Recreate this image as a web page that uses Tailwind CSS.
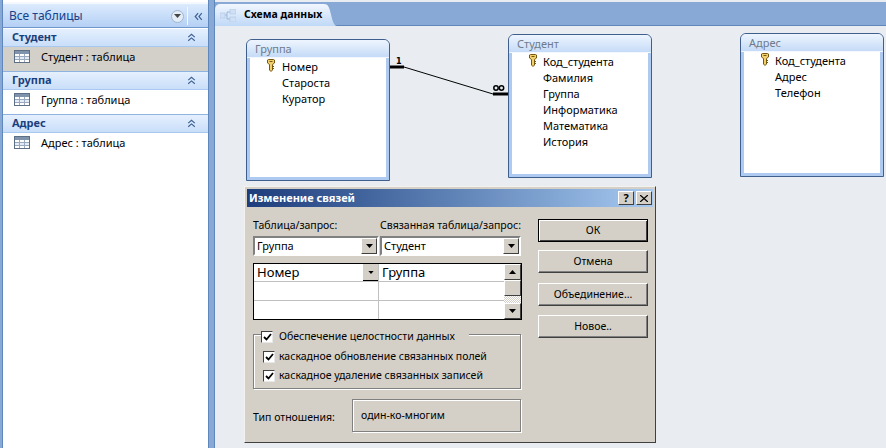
<!DOCTYPE html>
<html lang="ru">
<head>
    <meta charset="UTF-8">
    <title>Схема данных</title>
    <script src="https://cdn.jsdelivr.net/npm/@tailwindcss/browser@4"></script>
</head>
<body class="w-[886px] h-[448px] overflow-hidden bg-[#e9edf1] text-[11px] text-black font-['Noto_Sans',sans-serif]">
    <svg class="hidden">
        <symbol id="tbl" viewBox="0 0 16 13">
            <rect x="0.5" y="0.5" width="15" height="12" fill="#fff" stroke="#5d6f86"/>
            <rect x="1" y="1" width="14" height="3" fill="#7f93ad"/>
            <rect x="1" y="7" width="14" height="2" fill="#e3ebf6"/>
            <path d="M1 6.500H15M1 9.500H15M5.500 4V12M10.500 4V12" stroke="#9aa9bd" fill="none"/>
        </symbol>
        <symbol id="key" viewBox="0 0 8 13">
            <path d="M.5 1 1.500.5h5l1 .5v3L5.500 5.500V11L4 12.500 2.500 11V5.500L.5 4Z" fill="#f0cf6c" stroke="#75570f"/>
            <path d="M2.500 2.500h3" stroke="#75570f"/>
            <path d="M5.500 7.500H7M5.500 9.500H7" stroke="#75570f"/>
        </symbol>
        <symbol id="chev" viewBox="0 0 11 10">
            <path d="M1.500 4.500 5.500 1l4 3.500M1.500 9 5.500 5.500l4 3.500" fill="none" stroke="#3b5f92" stroke-width="1.400"/>
        </symbol>
        <symbol id="down" viewBox="0 0 7 4"><path d="M0 0H7L3.500 4Z" fill="#000"/></symbol>
    </svg>

    <div class="flex h-full">
        <!-- Navigation pane -->
        <aside class="w-[214px] shrink-0 h-full flex bg-[#88a9d6]">
            <div class="w-[207px] h-full ml-[2px] flex flex-col border-x border-[#5f87bb] bg-white">
                <div class="h-[25px] mt-[2px] shrink-0 flex items-center pl-[6px] pt-[1px] border-t-2 border-[#f5f9fe] bg-gradient-to-b from-[#dcebfd] to-[#b4d0f5] text-[#15428b] text-[12px] shadow-[0_1px_0_#6f97cc]">
                    <span class="flex-1">Все таблицы</span>
                    <span class="w-[13px] h-[13px] mr-[3px] rounded-full border border-[#9fb4cf] bg-[#e4ecf6] flex items-center justify-center">
                        <svg class="w-[7px] h-[4px] opacity-70"><use href="#down"/></svg>
                    </span>
                    <span class="w-px h-[18px] bg-[#f5f9fe] mr-[6px]"></span>
                    <svg class="w-[9px] h-[9px] mr-[5px] -rotate-90"><use href="#chev"/></svg>
                </div>
                <div class="h-[2px] shrink-0"></div>
                <section class="h-[43px] shrink-0 flex flex-col bg-[#d3d0c9] border-b border-[#8fb2e0]">
                    <div class="h-[18px] flex items-center justify-between pl-[9px] pr-[12px] bg-gradient-to-b from-[#e5f0fe] to-[#c9def9] border-b border-[#a9c8f0] text-[#1b3f7c] font-bold text-[11px]">
                        <span>Студент</span><svg class="w-[9px] h-[9px]"><use href="#chev"/></svg>
                    </div>
                    <div class="flex-1 flex items-start">
                        <svg class="w-[16px] h-[13px] ml-[11px] mt-[3px]"><use href="#tbl"/></svg>
                        <span class="ml-[11px] mt-[2px]">Студент : таблица</span>
                    </div>
                </section>
                <section class="h-[43px] shrink-0 flex flex-col border-b border-[#8fb2e0]">
                    <div class="h-[18px] flex items-center justify-between pl-[9px] pr-[12px] bg-gradient-to-b from-[#e5f0fe] to-[#c9def9] border-b border-[#a9c8f0] text-[#1b3f7c] font-bold text-[11px]">
                        <span>Группа</span><svg class="w-[9px] h-[9px]"><use href="#chev"/></svg>
                    </div>
                    <div class="flex-1 flex items-start">
                        <svg class="w-[16px] h-[13px] ml-[11px] mt-[3px]"><use href="#tbl"/></svg>
                        <span class="ml-[11px] mt-[2px]">Группа : таблица</span>
                    </div>
                </section>
                <section class="flex-1 flex flex-col">
                    <div class="h-[18px] flex items-center justify-between pl-[9px] pr-[12px] bg-gradient-to-b from-[#e5f0fe] to-[#c9def9] border-b border-[#a9c8f0] text-[#1b3f7c] font-bold text-[11px]">
                        <span>Адрес</span><svg class="w-[9px] h-[9px]"><use href="#chev"/></svg>
                    </div>
                    <div class="flex-1 flex items-start">
                        <svg class="w-[16px] h-[13px] ml-[11px] mt-[3px]"><use href="#tbl"/></svg>
                        <span class="ml-[11px] mt-[2px]">Адрес : таблица</span>
                    </div>
                </section>
            </div>
        </aside>

        <!-- Document area -->
        <main class="relative flex-1 h-full border-l border-[#5f87bb]">
            <div class="h-[24px] mt-[2px] bg-[#88a9d6] border-b border-[#5f87bb] flex items-end">
                <div class="w-[108px] h-[22px] shrink-0 -mb-px flex items-center pl-[5px] gap-[8px] whitespace-nowrap rounded-tl-[5px] bg-gradient-to-b from-[#f2f7fe] to-[#bfd8f7] font-bold text-[10.500px]">
                    <svg class="w-[16px] h-[13px] shrink-0" viewBox="0 0 16 13">
                        <path d="M4 6h3M7 3v7M7 3h3M7 10h3" stroke="#9db7d8" fill="none"/>
                        <rect x="0" y="4" width="5" height="5" fill="#cfe0f5" stroke="#a9c0de" stroke-width=".5"/>
                        <rect x="10" y="0" width="6" height="5" fill="#cfe0f5" stroke="#a9c0de" stroke-width=".5"/>
                        <rect x="10" y="8" width="6" height="5" fill="#cfe0f5" stroke="#a9c0de" stroke-width=".5"/>
                    </svg>
                    <span>Схема данных</span>
                </div>
                <svg class="w-[14px] h-[22px] shrink-0 -mb-px" viewBox="0 0 16 22" preserveAspectRatio="none">
                    <defs>
                        <linearGradient id="tabfill" gradientUnits="userSpaceOnUse" x1="0" y1="0" x2="0" y2="22">
                            <stop offset="0" stop-color="#f2f7fe"/>
                            <stop offset="1" stop-color="#bfd8f7"/>
                        </linearGradient>
                    </defs>
                    <path d="M0 0H1C6 0 7 3 9 10 11 18 13 22 16 22H0Z" fill="url(#tabfill)"/>
                </svg>
            </div>

            <!-- Relationship diagram: coordinates are relative to this area -->
            <article class="absolute left-[31px] top-[39px] w-[144px] h-[142px] flex flex-col border border-[#3f5f8c] rounded-t-[6px] bg-[#aecaf0] overflow-hidden">
                <div class="h-[18px] shrink-0 pl-[8px] leading-[18px] text-[#6f7b8c] text-[11px] bg-gradient-to-b from-[#eef5fe] to-[#c5dbf7] border-b border-[#f4f8fe]">Группа</div>
                <ul class="flex-1 mx-[3px] mb-[3px] bg-white pt-[1px]">
                    <li class="h-[16px] pl-[32px] leading-[16px] relative"><svg class="absolute left-[17px] top-0 w-[8px] h-[13px]"><use href="#key"/></svg>Номер</li>
                    <li class="h-[16px] pl-[32px] leading-[16px]">Староста</li>
                    <li class="h-[16px] pl-[32px] leading-[16px]">Куратор</li>
                </ul>
            </article>
            <article class="absolute left-[293px] top-[34px] w-[144px] h-[144px] flex flex-col border border-[#3f5f8c] rounded-t-[6px] bg-[#aecaf0] overflow-hidden">
                <div class="h-[18px] shrink-0 pl-[8px] leading-[18px] text-[#6f7b8c] text-[11px] bg-gradient-to-b from-[#eef5fe] to-[#c5dbf7] border-b border-[#f4f8fe]">Студент</div>
                <ul class="flex-1 mx-[3px] mb-[3px] bg-white pt-[1px]">
                    <li class="h-[16px] pl-[31px] leading-[16px] relative"><svg class="absolute left-[17px] top-0 w-[8px] h-[13px]"><use href="#key"/></svg>Код_студента</li>
                    <li class="h-[16px] pl-[31px] leading-[16px]">Фамилия</li>
                    <li class="h-[16px] pl-[31px] leading-[16px]">Группа</li>
                    <li class="h-[16px] pl-[31px] leading-[16px]">Информатика</li>
                    <li class="h-[16px] pl-[31px] leading-[16px]">Математика</li>
                    <li class="h-[16px] pl-[31px] leading-[16px]">История</li>
                </ul>
            </article>
            <article class="absolute left-[525px] top-[33px] w-[144px] h-[144px] flex flex-col border border-[#3f5f8c] rounded-t-[6px] bg-[#aecaf0] overflow-hidden">
                <div class="h-[18px] shrink-0 pl-[8px] leading-[18px] text-[#6f7b8c] text-[11px] bg-gradient-to-b from-[#eef5fe] to-[#c5dbf7] border-b border-[#f4f8fe]">Адрес</div>
                <ul class="flex-1 mx-[3px] mb-[3px] bg-white pt-[1px]">
                    <li class="h-[16px] pl-[31px] leading-[16px] relative"><svg class="absolute left-[17px] top-0 w-[8px] h-[13px]"><use href="#key"/></svg>Код_студента</li>
                    <li class="h-[16px] pl-[31px] leading-[16px]">Адрес</li>
                    <li class="h-[16px] pl-[31px] leading-[16px]">Телефон</li>
                </ul>
            </article>

            <svg class="absolute left-[175px] top-[55px] w-[120px] h-[45px]" viewBox="0 0 120 45">
                <path d="M0 12H14" stroke="#000" stroke-width="3"/>
                <path d="M14 12 103 39" stroke="#000" fill="none"/>
                <path d="M103 39H118" stroke="#000" stroke-width="3"/>
                <text x="6" y="9" font-family="DejaVu Sans" font-weight="bold" font-size="8" fill="#000">1</text>
                <circle cx="106" cy="33" r="2.200" fill="none" stroke="#000" stroke-width="1.500"/>
                <circle cx="111.500" cy="33" r="2.200" fill="none" stroke="#000" stroke-width="1.500"/>
            </svg>

            <!-- Edit Relationships dialog -->
            <div class="absolute left-[29px] top-[186px] w-[412px] h-[257px] flex flex-col bg-[#d4d0c8] border border-t-[#f4f2ee] border-l-[#f4f2ee] border-r-[#404040] border-b-[#404040] p-[2px] text-[10.500px]">
                <div class="h-[18px] shrink-0 flex items-center justify-between pl-[2px] pr-[1px] bg-gradient-to-r from-[#1e3d7c] to-[#a6caf0] text-white font-bold text-[11px]">
                    <span>Изменение связей</span>
                    <div class="flex gap-[2px]">
                        <span class="w-[16px] h-[14px] flex items-center justify-center bg-[#d4d0c8] text-black font-bold text-[11px] border border-t-white border-l-white border-r-[#404040] border-b-[#404040]">?</span>
                        <span class="w-[16px] h-[14px] flex items-center justify-center bg-[#d4d0c8] border border-t-white border-l-white border-r-[#404040] border-b-[#404040]">
                            <svg class="w-[8px] h-[7px]" viewBox="0 0 8 7"><path d="M0 0 8 7M8 0 0 7" stroke="#000" stroke-width="1.300"/></svg>
                        </span>
                    </div>
                </div>

                <div class="flex flex-1 pl-[6px] pt-[10px]">
                    <div class="w-[270px] shrink-0">
                        <div class="flex h-[17px] items-center whitespace-nowrap">
                            <span class="w-[127px]">Таблица/запрос:</span><span>Связанная таблица/запрос:</span>
                        </div>
                        <div class="flex gap-[1px] mt-[2px] text-[11px]">
                            <div class="w-[126px] h-[20px] flex items-center justify-between bg-white border-2 border-t-[#808080] border-l-[#808080] border-r-white border-b-white pl-[2px]">
                                <span class="pt-[1px]">Группа</span>
                                <span class="w-[16px] h-[16px] flex items-center justify-center bg-[#d4d0c8] border border-t-white border-l-white border-r-[#404040] border-b-[#404040]"><svg class="w-[7px] h-[4px]"><use href="#down"/></svg></span>
                            </div>
                            <div class="w-[141px] h-[20px] flex items-center justify-between bg-white border-2 border-t-[#808080] border-l-[#808080] border-r-white border-b-white pl-[2px]">
                                <span class="pt-[1px]">Студент</span>
                                <span class="w-[16px] h-[16px] flex items-center justify-center bg-[#d4d0c8] border border-t-white border-l-white border-r-[#404040] border-b-[#404040]"><svg class="w-[7px] h-[4px]"><use href="#down"/></svg></span>
                            </div>
                        </div>

                        <div class="w-[269px] h-[57px] mt-[7px] flex bg-white border border-black">
                            <div class="flex-1 grid grid-cols-[125px_1fr] grid-rows-3">
                                <div class="flex items-center justify-between pl-[3px] border-r border-b border-[#c0c0c0] text-[13px]">
                                    <span>Номер</span>
                                    <span class="w-[15px] h-[17px] flex items-center justify-center bg-[#d4d0c8] border-b border-black"><svg class="w-[6px] h-[3px]"><use href="#down"/></svg></span>
                                </div>
                                <div class="flex items-center pl-[3px] border-b border-[#c0c0c0] text-[13px]">Группа</div>
                                <div class="border-r border-b border-[#c0c0c0]"></div>
                                <div class="border-b border-[#c0c0c0]"></div>
                                <div class="border-r border-[#c0c0c0]"></div>
                                <div></div>
                            </div>
                            <div class="w-[17px] shrink-0 flex flex-col bg-[repeating-conic-gradient(#d4d0c8_0_25%,#fff_0_50%)] bg-[length:2px_2px]">
                                <span class="h-[16px] flex items-center justify-center bg-[#d4d0c8] border border-t-white border-l-white border-r-[#404040] border-b-[#404040]"><svg class="w-[7px] h-[4px] rotate-180"><use href="#down"/></svg></span>
                                <span class="h-[16px] bg-[#d4d0c8] border border-t-white border-l-white border-r-[#404040] border-b-[#404040]"></span>
                                <span class="flex-1"></span>
                                <span class="h-[16px] flex items-center justify-center bg-[#d4d0c8] border border-t-white border-l-white border-r-[#404040] border-b-[#404040]"><svg class="w-[7px] h-[4px]"><use href="#down"/></svg></span>
                            </div>
                        </div>

                        <fieldset class="relative w-[268px] h-[55px] mt-[14px] border border-[#808080] shadow-[1px_1px_0_#fff,inset_1px_1px_0_#fff] pl-[9px] pt-[12px]">
                            <label class="absolute left-[7px] -top-[5px] h-[14px] flex items-center gap-[6px] pr-[14px] bg-[#d4d0c8]">
                                <span class="w-[12px] h-[12px] flex items-center justify-center bg-white border border-t-[#404040] border-l-[#404040] border-r-[#e8e8e8] border-b-[#e8e8e8]"><svg class="w-[9px] h-[8px]" viewBox="0 0 9 8"><path d="M1 4 3.500 6.500 8 1" fill="none" stroke="#000" stroke-width="1.800"/></svg></span>
                                Обеспечение целостности данных
                            </label>
                            <label class="h-[19px] flex items-center gap-[4px]">
                                <span class="w-[12px] h-[12px] flex items-center justify-center bg-white border border-t-[#404040] border-l-[#404040] border-r-[#e8e8e8] border-b-[#e8e8e8]"><svg class="w-[9px] h-[8px]" viewBox="0 0 9 8"><path d="M1 4 3.500 6.500 8 1" fill="none" stroke="#000" stroke-width="1.800"/></svg></span>
                                каскадное обновление связанных полей
                            </label>
                            <label class="h-[19px] flex items-center gap-[4px]">
                                <span class="w-[12px] h-[12px] flex items-center justify-center bg-white border border-t-[#404040] border-l-[#404040] border-r-[#e8e8e8] border-b-[#e8e8e8]"><svg class="w-[9px] h-[8px]" viewBox="0 0 9 8"><path d="M1 4 3.500 6.500 8 1" fill="none" stroke="#000" stroke-width="1.800"/></svg></span>
                                каскадное удаление связанных записей
                            </label>
                        </fieldset>

                        <div class="flex mt-[10px]">
                            <span class="w-[99px] pt-[11px]">Тип отношения:</span>
                            <div class="w-[169px] h-[33px] pl-[8px] pt-[8px] border border-[#808080] shadow-[1px_1px_0_#fff,inset_1px_1px_0_#fff]">один-ко-многим</div>
                        </div>
                    </div>

                    <div class="ml-[15px] mt-[2px] w-[110px] flex flex-col">
                        <button class="w-[110px] h-[23px] bg-[#d4d0c8] border border-black shadow-[inset_1px_1px_0_#fff,inset_-1px_-1px_0_#404040]">ОК</button>
                        <button class="w-[110px] h-[23px] mt-[8px] bg-[#d4d0c8] border border-t-white border-l-white border-r-[#404040] border-b-[#404040] shadow-[inset_-1px_-1px_0_#808080]">Отмена</button>
                        <button class="w-[110px] h-[23px] mt-[10px] bg-[#d4d0c8] border border-t-white border-l-white border-r-[#404040] border-b-[#404040] shadow-[inset_-1px_-1px_0_#808080]">Объединение...</button>
                        <button class="w-[110px] h-[23px] mt-[9px] bg-[#d4d0c8] border border-t-white border-l-white border-r-[#404040] border-b-[#404040] shadow-[inset_-1px_-1px_0_#808080]">Новое..</button>
                    </div>
                </div>
            </div>
        </main>
    </div>
</body>
</html>
